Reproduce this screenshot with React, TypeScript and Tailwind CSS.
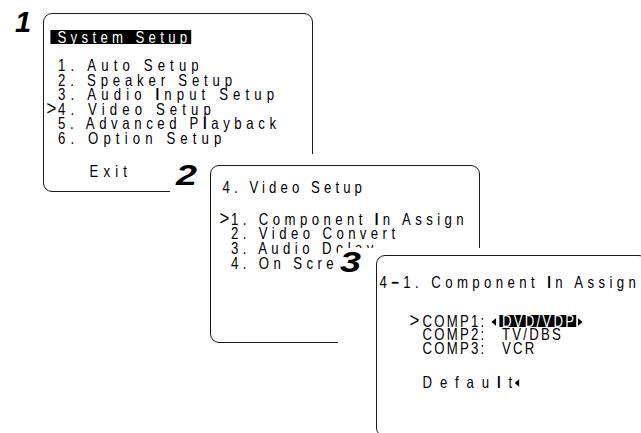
import React from 'react';

// OSD lettering: narrow grotesque with wide tracking (Arial metrics squeezed horizontally).
const osd = "font-['Liberation_Sans',Arial,sans-serif] text-[16.5px] text-black";
const squeeze = 'origin-top-left scale-x-[0.8] whitespace-pre';
const numeral = "absolute font-['Liberation_Sans',Arial,sans-serif] text-[29px] leading-none font-bold italic text-black";
const frame = 'absolute rounded-[9px] border-[1.5px] border-[#1a1a1a] bg-white';

// little filled arrows used by the on-screen menu
function TriLeft() {
  return (
    <svg width="6" height="8" viewBox="0 0 6 8" className="block">
      <path d="M6 0 L0 4 L6 8 Z" fill="black" />
    </svg>
  );
}

function TriRight() {
  return (
    <svg width="6" height="8" viewBox="0 0 6 8" className="block">
      <path d="M0 0 L6 4 L0 8 Z" fill="black" />
    </svg>
  );
}

function Cursor({ on, w = 14.4 }: { on?: boolean; w?: number }) {
  return (
    <span className="inline-block shrink-0 text-[21px] leading-[0] tracking-normal" style={{ width: w }}>
      {on ? '>' : ''}
    </span>
  );
}

function Row({ cursor, children, className }: { cursor?: boolean; children: React.ReactNode; className?: string }) {
  return (
    <div className="flex items-baseline">
      <Cursor on={cursor} />
      <span className={className}>{children}</span>
    </div>
  );
}

const B = ({ children }: { children: React.ReactNode }) => <span className="font-bold">{children}</span>;

export default function App() {
  return (
    <div className="relative h-[433px] w-[641px] overflow-hidden bg-white">
      {/* Step 1 */}
      <div className={`${numeral} left-[15px] top-[8px]`}>1</div>
      <div className={`${frame} ${osd} left-[43px] top-[13px] h-[179px] w-[270px] pt-[16px]`}>
        <div className={`${squeeze} w-[334px]`}>
          <div className="ml-[8.1px] w-fit bg-black pl-[8.75px] leading-[14px] tracking-[5.4px] text-white">
            System Setup
          </div>
          <div className="mt-[14px] pl-[3.1px] leading-[14.5px] tracking-[6.4px]">
            <Row>1. Auto Setup</Row>
            <Row className="tracking-[6px]">2. Speaker Setup</Row>
            <Row>
              3. Audio <B>I</B>nput Setup
            </Row>
            <Row cursor>4. Video Setup</Row>
            <Row className="tracking-[5.75px]">
              5. Advanced P<B>l</B>ayback
            </Row>
            <Row>6. Option Setup</Row>
          </div>
          <div className="ml-[56.9px] mt-[19px] leading-[14.5px] tracking-[6.4px]">Exit</div>
        </div>
      </div>

      {/* Step 2 */}
      <div className="absolute left-[170px] top-[154px] h-[279px] w-[471px] bg-white">
        <div className={`${numeral} left-[6px] top-[7px] origin-left scale-x-[1.3]`}>2</div>
        <div className={`${frame} ${osd} left-[40px] top-[11px] h-[178px] w-[270px] pt-[13.5px]`}>
          <div className={`${squeeze} w-[334px]`}>
            <div className="pl-[14.4px] leading-[14px] tracking-[5.1px]">4. Video Setup</div>
            <div className="mt-[18px] pl-[10.6px] leading-[14.7px] tracking-[5.5px]">
              <Row cursor>
                1. Component <B>I</B>n Assign
              </Row>
              <Row>2. Video Convert</Row>
              <Row>3. Audio Delay</Row>
              <Row>4. On Screen Display</Row>
            </div>
          </div>
        </div>
      </div>

      {/* Step 3 */}
      <div className="absolute left-[338px] top-[248px] h-[185px] w-[303px] bg-white">
        <div className={`${numeral} left-[2px] top-[0px] origin-left scale-x-[1.3]`}>3</div>
        <div className={`${frame} ${osd} left-[38px] top-[7px] h-[182px] w-[272px] pt-[18.5px]`}>
          <div className={`${squeeze} w-[340px]`}>
            <div className="pl-[3.1px] leading-[14px] tracking-[5.5px]">
              4<B>−</B>1. Component <B>I</B>n Assign
            </div>
            <div className="ml-[40.6px] mt-[26.25px] leading-[13.5px] tracking-[2.8px]">
              <div className="flex items-baseline">
                <Cursor on w={16.25} />
                <span className="inline-block w-[86.25px]">COMP1:</span>
                <span className="inline-block w-[10px] self-center">
                  <TriLeft />
                </span>
                <span className="inline-block bg-black pl-[3px] leading-[12.5px] text-white">DVD/VDP</span>
                <span className="ml-[2px] self-center">
                  <TriRight />
                </span>
              </div>
              <div className="flex items-baseline">
                <Cursor w={16.25} />
                <span className="inline-block w-[96.25px]">COMP2:</span>
                <span className="pl-[3px]">TV/DBS</span>
              </div>
              <div className="flex items-baseline">
                <Cursor w={16.25} />
                <span className="inline-block w-[96.25px]">COMP3:</span>
                <span className="pl-[3px]">VCR</span>
              </div>
            </div>
            <div className="ml-[56.9px] mt-[20.5px] flex items-center leading-[13.5px]">
              <span className="tracking-[9.8px]">
                Defau<B>l</B>t
              </span>
              <span className="-ml-[7px]">
                <TriLeft />
              </span>
            </div>
          </div>
        </div>
      </div>
    </div>
  );
}
